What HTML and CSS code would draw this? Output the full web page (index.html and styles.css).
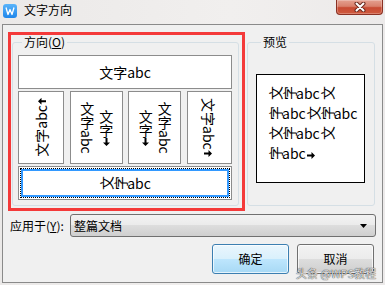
FILE: index.html
```html
<!DOCTYPE html>
<html lang="zh-CN">
<head>
    <meta charset="UTF-8">
    <meta name="viewport" content="width=device-width, initial-scale=1.0">
    <title>文字方向</title>
    <link rel="stylesheet" href="styles.css">
</head>
<body>
    <div class="window">
        <div class="titlebar">
            <svg class="app-icon" width="14" height="14" viewBox="0 0 14 14">
                <defs>
                    <linearGradient id="iconGrad" x1="0" y1="0" x2="0" y2="1">
                        <stop offset="0" stop-color="#5ab4fa"/>
                        <stop offset="1" stop-color="#1f86ea"/>
                    </linearGradient>
                </defs>
                <rect x="0" y="0" width="14" height="14" rx="3" fill="url(#iconGrad)"/>
                <path d="M3 3.5l2 7 2-5 2 5 2-7" fill="none" stroke="#fff" stroke-width="1.3" stroke-linejoin="round"/>
            </svg>
            <span class="title">文字方向</span>
            <button class="close-btn">
                <svg width="14" height="10" viewBox="0 0 14 10">
                    <path d="M3.5 1.5l7 7M10.5 1.5l-7 7" stroke="#6b2a20" stroke-width="4" stroke-linecap="round"/>
                    <path d="M3.5 1.5l7 7M10.5 1.5l-7 7" stroke="#fff" stroke-width="2" stroke-linecap="round"/>
                </svg>
            </button>
        </div>

        <div class="client">
            <div class="top">
                <div class="highlight">
                    <fieldset class="group dir-group">
                        <legend>方向(<u>O</u>)</legend>
                        <button class="opt opt-wide">文字abc</button>
                        <div class="opt-row">
                            <button class="opt"><span class="v-up">文字abc<svg class="arrow" width="8" height="7" viewBox="0 0 8 7"><path d="M0 2.5h4.5v-2.5l3.5 3.5-3.5 3.5v-2.5h-4.5z"/></svg></span></button>
                            <button class="opt"><span class="v-lr">文字abc<br>文字<svg class="arrow" width="7" height="8" viewBox="0 0 7 8"><path d="M2.5 0h2v4.5h2.5l-3.5 3.5-3.5-3.5h2.5z"/></svg></span></button>
                            <button class="opt"><span class="v-rl">文字abc<br>文字<svg class="arrow" width="7" height="8" viewBox="0 0 7 8"><path d="M2.5 0h2v4.5h2.5l-3.5 3.5-3.5-3.5h2.5z"/></svg></span></button>
                            <button class="opt"><span class="v-down">文字abc<svg class="arrow" width="8" height="7" viewBox="0 0 8 7"><path d="M0 2.5h4.5v-2.5l3.5 3.5-3.5 3.5v-2.5h-4.5z"/></svg></span></button>
                        </div>
                        <button class="opt opt-wide sel">
                            <span class="focus"><span class="face"><span class="rot">文</span><span class="rot">字</span>abc</span></span>
                        </button>
                    </fieldset>
                </div>

                <fieldset class="group preview-group">
                    <legend>预览</legend>
                    <div class="preview">
                        <div class="line"><span class="rot">文</span><span class="rot">字</span>abc<span class="rot">文</span></div>
                        <div class="line"><span class="rot">字</span>abc<span class="rot">文</span><span class="rot">字</span>abc</div>
                        <div class="line"><span class="rot">文</span><span class="rot">字</span>abc<span class="rot">文</span></div>
                        <div class="line"><span class="rot">字</span>abc<svg class="arrow" width="8" height="7" viewBox="0 0 8 7"><path d="M0 2.5h4.5v-2.5l3.5 3.5-3.5 3.5v-2.5h-4.5z"/></svg></div>
                    </div>
                </fieldset>
            </div>

            <div class="apply-row">
                <label class="apply-label">应用于(<u>Y</u>):</label>
                <div class="combo">
                    <span>整篇文档</span>
                    <svg width="7" height="4" viewBox="0 0 7 4"><path d="M0 0h7l-3.5 4z"/></svg>
                </div>
            </div>

            <div class="actions">
                <button class="btn btn-default">确定</button>
                <button class="btn">取消</button>
            </div>

            <span class="watermark">头条 @WPS教程</span>
        </div>
    </div>
</body>
</html>
```

FILE: styles.css
```css
body {
    margin: 0;
    width: 385px;
    height: 285px;
    overflow: hidden;
    background: linear-gradient(90deg, #ebe9e8, #f1efee 60%, #eceaea);
    font-family: "Noto Sans CJK SC", "Liberation Sans", sans-serif;
    font-size: 12px;
    color: #000;
}
button {
    font-family: inherit;
    color: #000;
    padding: 0;
    margin: 0;
}
.titlebar {
    display: flex;
    align-items: flex-start;
    height: 24px;
}
.app-icon {
    margin: 4px 0 0 3px;
    flex: none;
}
.title {
    margin-left: 7px;
    margin-top: 2px;
    line-height: 16px;
    font-size: 12px;
}
.close-btn {
    margin-left: auto;
    margin-right: 2px;
    width: 47px;
    height: 15px;
    border: 1px solid #8a3023;
    border-top: none;
    border-radius: 0 0 4px 4px;
    background: linear-gradient(#e4a090 0%, #d9806c 45%, #c84a33 55%, #cf5a3f 100%);
    box-shadow: inset 0 0 0 1px rgba(255, 255, 255, 0.25);
    display: flex;
    align-items: center;
    justify-content: center;
}
.client {
    position: relative;
    box-sizing: border-box;
    height: 259px;
    margin: 0 2px;
    border: 1px solid #8a8a8a;
    background: #f0f0f0;
}
.top {
    display: flex;
    align-items: flex-start;
    padding: 7px 0 0 5px;
}
.highlight {
    box-sizing: border-box;
    width: 237px;
    height: 179px;
    border: 3px solid #f43a3a;
    padding: 0 2px 0 1px;
}
.group {
    box-sizing: border-box;
    margin: 0;
    min-width: 0;
    border: 1px solid #d5dfe5;
    border-radius: 3px;
    height: 171px;
}
.group legend {
    padding: 0 2px;
    line-height: 14px;
    font-size: 12px;
}
.dir-group {
    width: 227px;
    padding: 6px 6px 5px 5px;
}
.dir-group legend {
    margin-left: 4px;
}
.opt {
    box-sizing: border-box;
    border: 1px solid #8c8c8c;
    background: #fff;
    font-size: 14px;
    display: flex;
    align-items: center;
    justify-content: center;
}
.opt-wide {
    width: 214px;
    height: 34px;
}
.opt-row {
    display: grid;
    grid-template-columns: 46px 53px 53px 45px;
    column-gap: 5px;
    justify-content: space-between;
    height: 73px;
    margin: 2px 0;
}
.opt-row .opt {
    height: 73px;
}
.v-up {
    writing-mode: vertical-rl;
    text-orientation: sideways;
    transform: rotate(180deg);
}
.v-down {
    writing-mode: vertical-rl;
    text-orientation: sideways;
}
.v-lr {
    writing-mode: vertical-lr;
    line-height: 19px;
}
.v-rl {
    writing-mode: vertical-rl;
    line-height: 19px;
}
.arrow {
    fill: #000;
}
.v-up .arrow,
.v-down .arrow {
    margin-left: 1px;
}
.rot {
    display: inline-block;
    transform: rotate(-90deg);
}
.sel {
    padding: 1px;
}
.focus {
    box-sizing: border-box;
    width: 100%;
    height: 100%;
    border: 1px dotted #000;
}
.face {
    box-sizing: border-box;
    display: flex;
    align-items: center;
    justify-content: center;
    height: 100%;
    border: 2px solid #3399ff;
}
.preview-group {
    width: 128px;
    margin-left: 2px;
    margin-top: 3px;
    padding: 25px 0 0 8px;
}
.preview-group legend {
    margin-left: 5px;
}
.preview {
    box-sizing: border-box;
    width: 109px;
    height: 109px;
    border: 1px solid #000;
    background: #fff;
    padding: 8px 0 0 11px;
    font-size: 14px;
}
.preview .line {
    height: 20px;
    line-height: 20px;
    white-space: nowrap;
}
.preview .arrow {
    margin-left: 1px;
}
.apply-row {
    display: flex;
    align-items: center;
    margin: 3px 6px 0 7px;
}
.apply-label {
    width: 60px;
    flex: none;
}
.combo {
    flex: 1;
    box-sizing: border-box;
    height: 23px;
    border: 1px solid #707070;
    border-radius: 3px;
    background: linear-gradient(#f2f2f2 0%, #ebebeb 50%, #dddddd 50%, #cfcfcf 100%);
    display: flex;
    align-items: center;
    justify-content: space-between;
    padding: 0 8px 0 3px;
}
.actions {
    display: flex;
    justify-content: flex-end;
    gap: 8px;
    margin-top: 7px;
    padding-right: 8px;
}
.btn {
    box-sizing: border-box;
    width: 77px;
    height: 30px;
    border: 1px solid #707070;
    border-radius: 3px;
    font-size: 12px;
    line-height: 14px;
    padding-bottom: 1px;
    background: linear-gradient(#f2f2f2 0%, #ebebeb 50%, #dddddd 50%, #cfcfcf 100%);
    box-shadow: inset 0 0 0 1px rgba(255, 255, 255, 0.7);
}
.btn-default {
    border-color: #3c7fb1;
    background: linear-gradient(#eaf6fd 0%, #d9f0fc 50%, #bee6fd 50%, #a7d9f5 100%);
}
.watermark {
    position: absolute;
    right: 6px;
    bottom: 3px;
    font-size: 11px;
    line-height: 12px;
    color: rgba(255, 255, 255, 0.85);
    text-shadow: 0 0 1px rgba(0, 0, 0, 0.7), 0 0 1px rgba(0, 0, 0, 0.7);
}
```
